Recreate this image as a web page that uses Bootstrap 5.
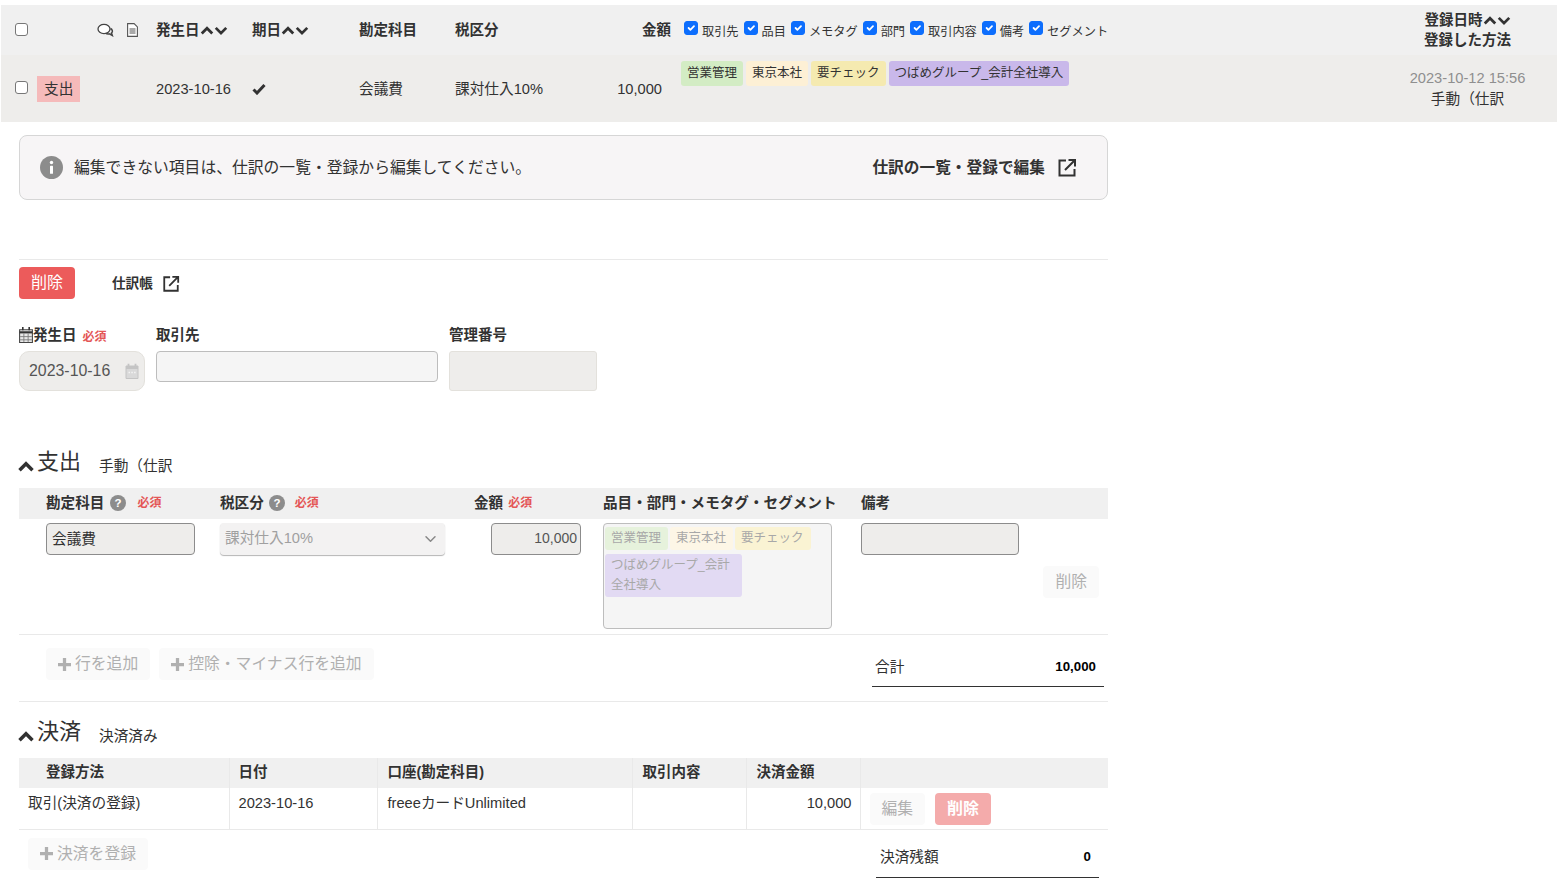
<!DOCTYPE html>
<html lang="ja">
<head>
<meta charset="utf-8">
<title>取引の詳細</title>
<link href="https://cdn.jsdelivr.net/npm/bootstrap@5.3.0/dist/css/bootstrap.min.css" rel="stylesheet">
<style>
html,body{background:#fff;margin:0;overflow:hidden}
body{font-family:"Liberation Sans","Noto Sans CJK JP",sans-serif;font-size:14.67px;line-height:20px;color:#323232}
.ico{display:inline-block;vertical-align:middle;flex:none}
.hd-sprite{position:absolute;width:0;height:0}
b,.fw-b{font-weight:700}

.band{margin:5px 5px 0 1px;width:1556px;table-layout:fixed;border-collapse:collapse}
.band td,.band th{padding:0;vertical-align:middle;font-weight:400}
.band thead tr{background:#f0f0f0;height:50px}
.band tbody tr{background:#eeedeb;height:67px}
.band th{font-weight:700;font-size:14.5px}
.band .cb-cell{padding-left:14px}
.band .check-in{margin:-2px 0 0;width:13px;height:13px;display:block;border-color:#777;border-radius:3px}
.band .t-right{text-align:right}
.kind{display:inline-block;background:#f5baba;padding:0 7px;height:26px;line-height:26px}
.picks{display:flex;align-items:flex-start;padding-left:3px;gap:5px;font-size:12.2px}
.picks label{display:flex;gap:4px;align-items:flex-start;font-weight:400;white-space:nowrap}
.picks span{margin-top:3px}
.picks .form-check-input{margin:2px 0 0;width:14px;height:14px;flex:none;border-radius:3px}
.chips{display:flex;gap:3px}
.chip{display:inline-block;font-size:12.5px;line-height:25px;height:25px;padding:0 6px;border-radius:3px;white-space:nowrap}
.c-green{background:#d3ecc4}.c-cream{background:#fdf0d5}.c-yellow{background:#f5eab0}.c-purple{background:#c9b8ea}
.reg{text-align:center}
.reg-date{color:#8f8f8f}
.reg-line{height:20px;display:flex;align-items:center;justify-content:center}

.main-col{margin-left:19px;width:1089px}
.note-box{margin-top:13px;height:65px;background:#f7f5f6;border:1px solid #d6d6d6;border-radius:8px;padding:0 30px 0 20px;display:flex;align-items:center;justify-content:space-between}
.note-msg{display:flex;align-items:center;gap:11px;font-size:15.8px}
.note-link{display:flex;align-items:center;gap:12px;font-size:15.7px;font-weight:700;color:#323232;text-decoration:none}
.rule{border-top:1px solid #e9e9e9}
.rule-a{margin-top:59px}
.bar{margin-top:7px;display:flex;align-items:center;gap:37px}
.btn-red{background:#ec5b5b;color:#fff;border:0;border-radius:4px;height:32px;width:56px;padding:0;font-size:16px;line-height:30px}
.journal-link{display:flex;align-items:center;gap:9px;font-size:13.6px;font-weight:700;color:#323232;text-decoration:none;margin-top:2px}
.fields{margin-top:26px;display:flex;align-items:flex-start;gap:11px}
.fields .lab{height:26px;font-size:14.5px;font-weight:700;display:flex;align-items:flex-start;white-space:nowrap}
.req{color:#e45656;font-size:12px;font-weight:700;margin-left:6px}
.fields .req{margin-top:2px}
.date-box{width:126px;height:40px;border:1px solid #e3e1dc;border-radius:10px;background:#eeedeb;display:flex;align-items:center;padding:0 5px 0 9px;font-size:16px;color:#555}
.date-box input{border:0;background:transparent;font-size:15.9px;color:#555;width:92px;padding:0;font-family:inherit;outline:0}
.vendor{width:282px;height:31px;border:1px solid #bdbdbd;border-radius:4px;background:#f5f5f5;display:block}
.serial{width:148px;height:40px;border:1px solid #e3e1dc;border-radius:3px;background:#eeedeb;display:block}
.sec-head{display:flex;align-items:center;height:30px}
.sec-head .ico{margin:8px 0 0 -2px}
.sec-head .ttl{font-size:22px;margin-left:2px;font-weight:400;margin-bottom:0;line-height:30px}
.sec-head .sub{margin-left:18px;margin-top:7px}
.sh-1{margin-top:56px}
.sh-2{margin-top:15px}

.lines-head,.lines-row{display:grid;grid-template-columns:27px 174px 254px 129px 258px 247px}
.lines-head{margin-top:11px;height:31px;padding-bottom:2px;background:#f0f0f0;align-items:center;font-weight:700;font-size:14.6px;white-space:nowrap}
.lines-head>div{display:flex;align-items:center}
.lines-row{padding:4px 0 5px;border-bottom:1px solid #e9e9e9}
.tx-in{height:32px;border:1px solid #8c8c8c;border-radius:4px;background:#eeedeb;padding:0 5px 3px;font-family:inherit;font-size:14.67px;color:#323232;display:block}
.w-acct{width:149px}
.w-amt{width:90px;margin-left:17px;text-align:right;padding-right:3px;font-size:14px;color:#555}
.w-memo{width:158px}
.tax-sel{width:225px;height:32px;margin-left:0;border:0;border-radius:4px;padding:0 30px 2px 5px;background-color:#f3f2f2;opacity:1;color:#a0a0a0;font-size:14.67px;box-shadow:0 1px 1px #b5b5b5;background-size:15px 12px;background-position:right 7px center;background-image:url("data:image/svg+xml,%3csvg xmlns='http://www.w3.org/2000/svg' viewBox='0 0 16 16'%3e%3cpath fill='none' stroke='%23888' stroke-linecap='round' stroke-linejoin='round' stroke-width='2' d='m2 5 6 6 6-6'/%3e%3c/svg%3e")}
.tax-sel:disabled{background-color:#f3f2f2;color:#a0a0a0}
.tag-area{width:229px;height:106px;border:1px solid #bdbdbd;border-radius:4px;background:#f5f5f5;padding:3px 1px;display:flex;flex-wrap:wrap;gap:4px 2px;align-content:flex-start;color:#a8a8a8;font-size:12.5px}
.pale{line-height:20px;padding:1px 7px 2px 6px;border-radius:3px}
.pale-green{background:#e6f2dc}.pale-cream{background:#fdf6e6}.pale-yellow{background:#faf3d3}.pale-purple{background:#e2daf3;width:137px}
.del-col{display:flex;flex-direction:column}
.btn-pale{background:#fafafa;color:#b0b0b0;border:0;border-radius:4px;height:32px;padding:0 12px;font-size:15.8px;line-height:30px;display:inline-flex;align-items:center;gap:4px;white-space:nowrap}
.del-col .btn-pale{margin-top:11px;align-self:flex-end;margin-right:9px}
.add-row{display:flex;justify-content:space-between;align-items:flex-start}
.add-btns{display:flex;gap:9px;margin:13px 0 0 27px}
.sum{width:232px;height:52px;margin-right:4px;border-bottom:1px solid #323232;padding:22px 8px 0 3px;display:flex;justify-content:space-between}
.sum b{font-size:13.3px;color:#000}
.rule-b{margin-top:14px}

.pay{width:1089px;margin-top:11px;table-layout:fixed;border-collapse:collapse}
.pay th{height:30px;background:#f0f0f0;font-size:14.5px;font-weight:700;padding:0 0 2px 9px;border-right:1px solid #e9e9e9;vertical-align:middle}
.pay td{height:41px;padding:5px 9px 0;vertical-align:top;border-right:1px solid #e9e9e9;border-bottom:1px solid #e9e9e9}
.pay th:last-child,.pay td:last-child{border-right:0}
.pay .act{padding:5px 0 0 9px}
.act-wrap{display:flex;gap:10px}
.btn-fade{background:#f4abab;color:#fff;border:0;border-radius:4px;height:32px;width:56px;padding:0;font-size:16px;font-weight:700}
.add-pay{margin:8px 0 0 9px}
.sum2{width:223px;height:48px;margin-right:9px;border-bottom:1px solid #323232;padding:17px 8px 0 4px;display:flex;justify-content:space-between}
.sum2 b{font-size:13.3px;color:#000}
</style>
</head>
<body>
<svg class="hd-sprite" aria-hidden="true">
  <defs>
    <symbol id="i-up" viewBox="0 0 16 12"><path d="M2 9.500 8 3.500l6 6" fill="none" stroke="currentColor" stroke-width="3.200" stroke-linejoin="miter"/></symbol>
    <symbol id="i-down" viewBox="0 0 16 12"><path d="M2 3 8 9l6-6" fill="none" stroke="currentColor" stroke-width="3.200"/></symbol>
    <symbol id="i-ext" viewBox="0 0 20 20"><path d="M9 2.500H2.500v15h15V11" fill="none" stroke="currentColor" stroke-width="2"/><path d="M8 12 17 3M11.500 2H18v6.500" fill="none" stroke="currentColor" stroke-width="2"/></symbol>
    <symbol id="i-q" viewBox="0 0 16 16"><circle cx="8" cy="8" r="8" fill="#8c8c8c"/><text x="8" y="12" font-size="11.500" font-weight="700" fill="#fff" text-anchor="middle" font-family="Liberation Sans">?</text></symbol>
    <symbol id="i-plus" viewBox="0 0 12 12"><path d="M6 0v12M0 6h12" stroke="currentColor" stroke-width="3" fill="none"/></symbol>
  </defs>
</svg>

<table class="band">
  <colgroup><col style="width:36px"><col style="width:60px"><col style="width:59px"><col style="width:96px"><col style="width:107px"><col style="width:96px"><col style="width:117px"><col style="width:109px"><col style="width:697px"><col style="width:179px"></colgroup>
  <thead>
    <tr>
      <th class="cb-cell"><input class="form-check-input check-in" type="checkbox" aria-label="全選択"></th>
      <th></th>
      <th>
        <div class="d-flex align-items-center" style="gap:13px">
          <svg class="ico" width="17" height="14" viewBox="0 0 17 14"><ellipse cx="7" cy="6" rx="6" ry="4.600" fill="#fff" stroke="#444" stroke-width="1.300"/><path d="M13.500 5.500c2 1 2.500 3.200 1 4.500l.8 2.500-2.800-1.600c-1.500.3-3 0-4-.8" fill="none" stroke="#444" stroke-width="1.500"/></svg>
          <svg class="ico" width="11" height="14" viewBox="0 0 11 14"><path d="M.6.6h6.500l3.300 3.300v9.500H.6z" fill="#fff" stroke="#555" stroke-width="1.100"/><path d="M2.500 6h6M2.500 8h6M2.500 10h6" stroke="#555"/></svg>
        </div>
      </th>
      <th><span class="d-inline-flex align-items-center">発生日<svg class="ico" width="14" height="11"><use href="#i-up"/></svg><svg class="ico" width="14" height="11"><use href="#i-down"/></svg></span></th>
      <th><span class="d-inline-flex align-items-center">期日<svg class="ico" width="14" height="11"><use href="#i-up"/></svg><svg class="ico" width="14" height="11"><use href="#i-down"/></svg></span></th>
      <th>勘定科目</th>
      <th>税区分</th>
      <th class="t-right" style="padding-right:10px">金額</th>
      <th>
        <div class="picks">
          <label><input class="form-check-input" type="checkbox" checked><span>取引先</span></label>
          <label><input class="form-check-input" type="checkbox" checked><span>品目</span></label>
          <label><input class="form-check-input" type="checkbox" checked><span>メモタグ</span></label>
          <label><input class="form-check-input" type="checkbox" checked><span>部門</span></label>
          <label><input class="form-check-input" type="checkbox" checked><span>取引内容</span></label>
          <label><input class="form-check-input" type="checkbox" checked><span>備考</span></label>
          <label><input class="form-check-input" type="checkbox" checked><span>セグメント</span></label>
        </div>
      </th>
      <th class="reg" style="vertical-align:top;padding-top:5px"><div class="reg-line">登録日時<svg class="ico" width="14" height="11"><use href="#i-up"/></svg><svg class="ico" width="14" height="11"><use href="#i-down"/></svg></div><div class="reg-line">登録した方法</div></th>
    </tr>
  </thead>
  <tbody>
    <tr>
      <td class="cb-cell"><input class="form-check-input check-in" type="checkbox" aria-label="選択"></td>
      <td><span class="kind">支出</span></td>
      <td></td>
      <td>2023-10-16</td>
      <td><svg class="ico" width="14" height="12" viewBox="0 0 14 12" style="margin-top:-2px"><path d="M1.500 6.500 5 10l7.500-8" fill="none" stroke="#323232" stroke-width="3"/></svg></td>
      <td>会議費</td>
      <td>課対仕入10%</td>
      <td class="t-right" style="padding-right:19px">10,000</td>
      <td style="vertical-align:top;padding-top:6px">
        <div class="chips">
          <span class="chip c-green">営業管理</span><span class="chip c-cream">東京本社</span><span class="chip c-yellow">要チェック</span><span class="chip c-purple">つばめグループ_会計全社導入</span>
        </div>
      </td>
      <td class="reg" style="vertical-align:top;padding-top:13px;line-height:21px"><span class="reg-date">2023-10-12 15:56</span><br>手動（仕訳</td>
    </tr>
  </tbody>
</table>

<div class="main-col">
  <div class="note-box">
    <div class="note-msg">
      <svg class="ico" width="23" height="23" viewBox="0 0 23 23"><circle cx="11.500" cy="11.500" r="11.500" fill="#8c8c8c"/><circle cx="11.500" cy="6.500" r="1.700" fill="#fff"/><rect x="10" y="9.800" width="3" height="8" rx=".6" fill="#fff"/></svg>
      <span>編集できない項目は、仕訳の一覧・登録から編集してください。</span>
    </div>
    <a class="note-link" href="#">仕訳の一覧・登録で編集<svg class="ico" width="20" height="20"><use href="#i-ext"/></svg></a>
  </div>

  <div class="rule rule-a"></div>
  <div class="bar">
    <button type="button" class="btn btn-red">削除</button>
    <a class="journal-link" href="#">仕訳帳<svg class="ico" width="18" height="18"><use href="#i-ext"/></svg></a>
  </div>

  <div class="fields">
    <div>
      <div class="lab">
        <svg class="ico" width="14" height="16" viewBox="0 0 13 15" style="margin-top:2px"><path d="M.5 2.500h12v12H.5z" fill="#e8e8e8" stroke="#444"/><path d="M.5 5h12" stroke="#333" stroke-width="2"/><path d="M4.500 6v8M8.500 6v8M1 9h11M1 12h11" stroke="#777" stroke-width=".8"/><path d="M3.500 0v3M9.500 0v3" stroke="#333" stroke-width="1.500"/></svg>発生日<span class="req">必須</span>
      </div>
      <div class="date-box">
        <input type="text" value="2023-10-16" disabled aria-label="発生日">
        <svg class="ico ms-auto" width="14" height="16" viewBox="0 0 14 16"><path d="M1 3h12v12.500H1z" fill="#d9d9d9" stroke="#c4c4c4"/><path d="M1 3h12v3H1z" fill="#c4c4c4"/><path d="M3.500 .8v3M10.500 .8v3" stroke="#c4c4c4" stroke-width="1.800"/><path d="M3.500 9.500h1.500M6.300 9.500h1.500M9.100 9.500h1.500" stroke="#f3f3f3" stroke-width="1.500"/></svg>
      </div>
    </div>
    <div>
      <div class="lab">取引先</div>
      <input class="vendor" type="text" aria-label="取引先">
    </div>
    <div>
      <div class="lab">管理番号</div>
      <input class="serial" type="text" disabled aria-label="管理番号">
    </div>
  </div>

  <div class="sec-head sh-1">
    <svg class="ico" width="18" height="13"><use href="#i-up"/></svg>
    <h2 class="ttl">支出</h2><span class="sub">手動（仕訳</span>
  </div>
  <div class="lines-head">
    <div></div>
    <div>勘定科目<svg class="ico" width="16" height="16" style="margin-left:6px"><use href="#i-q"/></svg><span class="req" style="margin-left:11px">必須</span></div>
    <div>税区分<svg class="ico" width="16" height="16" style="margin-left:5px"><use href="#i-q"/></svg><span class="req" style="margin-left:10px">必須</span></div>
    <div>金額<span class="req" style="margin-left:5px">必須</span></div>
    <div>品目・部門・メモタグ・セグメント</div>
    <div>備考</div>
  </div>
  <div class="lines-row">
    <div></div>
    <div><input class="tx-in w-acct" value="会議費" disabled aria-label="勘定科目"></div>
    <div><select class="form-select tax-sel" disabled aria-label="税区分"><option>課対仕入10%</option></select></div>
    <div><input class="tx-in w-amt" value="10,000" disabled aria-label="金額"></div>
    <div>
      <div class="tag-area">
        <span class="pale pale-green">営業管理</span><span class="pale pale-cream">東京本社</span><span class="pale pale-yellow">要チェック</span><span class="pale pale-purple">つばめグループ_会計全社導入</span>
      </div>
    </div>
    <div class="del-col">
      <input class="tx-in w-memo" disabled aria-label="備考">
      <button type="button" class="btn btn-pale">削除</button>
    </div>
  </div>
  <div class="add-row">
    <div class="add-btns">
      <button type="button" class="btn btn-pale"><svg class="ico" width="13" height="13"><use href="#i-plus"/></svg>行を追加</button>
      <button type="button" class="btn btn-pale"><svg class="ico" width="13" height="13"><use href="#i-plus"/></svg>控除・マイナス行を追加</button>
    </div>
    <div class="sum"><span>合計</span><b>10,000</b></div>
  </div>
  <div class="rule rule-b"></div>

  <div class="sec-head sh-2">
    <svg class="ico" width="18" height="13"><use href="#i-up"/></svg>
    <h2 class="ttl">決済</h2><span class="sub">決済済み</span>
  </div>
  <table class="pay">
    <colgroup><col style="width:210px"><col style="width:148px"><col style="width:255px"><col style="width:114px"><col style="width:114px"><col style="width:248px"></colgroup>
    <thead>
      <tr><th style="padding-left:27px">登録方法</th><th>日付</th><th style="padding-left:10px">口座(勘定科目)</th><th style="padding-left:10px">取引内容</th><th style="padding-left:10px">決済金額</th><th></th></tr>
    </thead>
    <tbody>
      <tr>
        <td>取引(決済の登録)</td>
        <td>2023-10-16</td>
        <td style="padding-left:10px">freeeカードUnlimited</td>
        <td></td>
        <td class="text-end" style="padding-right:8px">10,000</td>
        <td class="act"><div class="act-wrap"><button type="button" class="btn btn-pale">編集</button><button type="button" class="btn btn-fade">削除</button></div></td>
      </tr>
    </tbody>
  </table>
  <div class="add-row">
    <div class="add-pay"><button type="button" class="btn btn-pale"><svg class="ico" width="13" height="13"><use href="#i-plus"/></svg>決済を登録</button></div>
    <div class="sum2"><span>決済残額</span><b>0</b></div>
  </div>
</div>
</body>
</html>
